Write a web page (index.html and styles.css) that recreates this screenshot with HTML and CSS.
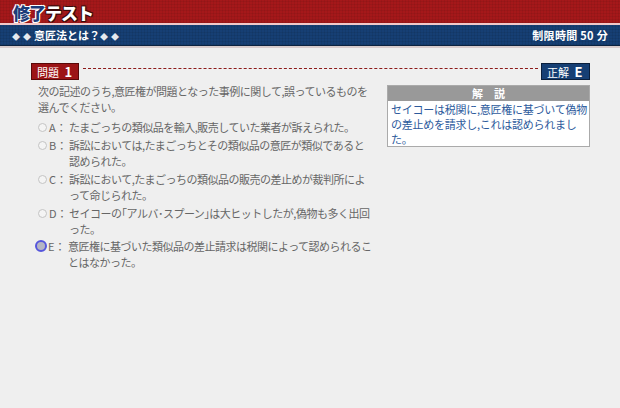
FILE: index.html
```html
<!DOCTYPE html>
<html lang="ja">
<head>
    <meta charset="UTF-8">
    <meta name="viewport" content="width=device-width, initial-scale=1.0">
    <title>修了テスト</title>
    <link rel="stylesheet" href="styles.css">
</head>
<body>
    <header class="cabecera">
        <div class="barra-titulo">
            <h1 class="titulo"><span class="titulo-azul">修了</span><span class="titulo-blanco">テスト</span></h1>
        </div>
        <div class="barra-sub">
            <span class="tema"><i>◆</i><i>◆</i>意匠法とは？<i>◆</i><i>◆</i></span>
            <span class="tiempo">制限時間 50 分</span>
        </div>
    </header>

    <main class="contenido">
        <div class="pregunta-cab">
            <span class="etiqueta-pregunta">問題 <b>1</b></span>
            <span class="linea"></span>
            <span class="etiqueta-correcta">正解 <b>E</b></span>
        </div>

        <div class="pregunta-cuerpo">
            <div class="columna">
                <p class="enunciado">次の記述のうち,意匠権が問題となった事例に関して,誤っているものを<br>選んでください。</p>
                <ul class="opciones">
                    <li class="opcion"><span class="radio"></span><span class="letra">A：</span><span class="texto">たまごっちの類似品を輸入,販売していた業者が訴えられた。</span></li>
                    <li class="opcion"><span class="radio"></span><span class="letra">B：</span><span class="texto">訴訟においては,たまごっちとその類似品の意匠が類似であると<br>認められた。</span></li>
                    <li class="opcion"><span class="radio"></span><span class="letra">C：</span><span class="texto">訴訟において,たまごっちの類似品の販売の差止めが裁判所によ<br>って命じられた。</span></li>
                    <li class="opcion"><span class="radio"></span><span class="letra">D：</span><span class="texto">セイコーの｢アルバ･スプーン｣は大ヒットしたが,偽物も多く出回<br>った。</span></li>
                    <li class="opcion elegida"><span class="radio"></span><span class="letra">E：</span><span class="texto">意匠権に基づいた類似品の差止請求は税関によって認められるこ<br>とはなかった。</span></li>
                </ul>
            </div>

            <aside class="explicacion">
                <div class="explicacion-cab">解　説</div>
                <p class="explicacion-texto">セイコーは税関に,意匠権に基づいて偽物<br>の差止めを請求し,これは認められまし<br>た。</p>
            </aside>
        </div>
    </main>
</body>
</html>
```

FILE: styles.css
```css
/* ------------------------- base ------------------------- */
body {
    margin: 0;
    background-color: #efefef;
    font-family: "Noto Sans CJK JP", "Noto Sans", sans-serif;
    font-size: 11px;
    color: #666;
}

/* ------------------------- cabecera ------------------------- */
.barra-titulo {
    height: 21px;
    padding: 2px 0 0 13px;
    background-color: #a5181a;
    background-image:
        repeating-linear-gradient(90deg, rgba(0,0,0,0.06) 0 1px, transparent 1px 3px),
        repeating-linear-gradient(0deg, rgba(0,0,0,0.06) 0 1px, transparent 1px 3px);
    border-bottom: 2px solid #f2c9c9;
}

.titulo {
    margin: 0;
    font-size: 17px;
    line-height: 21px;
    font-weight: 900;
    letter-spacing: -1px;
}

.titulo-azul {
    color: #1c3c7a;
    text-shadow: -1px -1px 0 #fff, 1px -1px 0 #fff, -1px 1px 0 #fff, 1px 1px 0 #fff;
}

.titulo-blanco {
    color: #fff;
    text-shadow: -1px -1px 0 #3a0a0a, 1px -1px 0 #3a0a0a, -1px 1px 0 #3a0a0a, 1px 1px 0 #3a0a0a;
}

.barra-sub {
    height: 20px;
    display: flex;
    justify-content: space-between;
    align-items: center;
    padding: 0 12px;
    background-color: #163f74;
    background-image:
        repeating-linear-gradient(90deg, rgba(0,0,0,0.07) 0 1px, transparent 1px 3px),
        repeating-linear-gradient(0deg, rgba(0,0,0,0.07) 0 1px, transparent 1px 3px);
    border-bottom: 1px solid #0c2340;
    box-shadow: 0 2px 0 #d8cccc;
    color: #fff;
    font-size: 11px;
    font-weight: bold;
}

.tema i {
    font-style: normal;
    font-size: 8px;
    margin-right: 3px;
    color: #e6e9ef;
}

.tiempo {
    letter-spacing: 0.3px;
}

/* ------------------------- contenido ------------------------- */
.contenido {
    padding: 17px 30px 0 31px;
}

.pregunta-cab {
    display: flex;
    align-items: center;
}

.etiqueta-pregunta,
.etiqueta-correcta {
    height: 15px;
    line-height: 15px;
    color: #fff;
    font-size: 11px;
    padding: 0 5px;
    white-space: nowrap;
}

.etiqueta-pregunta b,
.etiqueta-correcta b {
    font-size: 13px;
    margin-left: 3px;
}

.etiqueta-pregunta {
    width: 36px;
    background-color: #9c1416;
    border: 1px solid #5a0808;
}

.etiqueta-correcta {
    width: 37px;
    background-color: #163f74;
    border: 1px solid #0a1f3c;
}

.linea {
    flex: 1;
    margin: 0 3px 0 4px;
    border-top: 1px dashed #8c1a1a;
    position: relative;
    top: -3px;
}

.pregunta-cuerpo {
    display: flex;
    justify-content: space-between;
    margin-top: 3px;
}

.columna {
    padding-left: 7px;
    width: 340px;
    letter-spacing: -0.5px;
}

.enunciado {
    margin: 0;
    line-height: 16px;
    white-space: nowrap;
}

.opciones {
    list-style: none;
    margin: 4px 0 0;
    padding: 0;
}

.opcion {
    display: flex;
    line-height: 16px;
    margin-bottom: 2px;
}

.texto {
    white-space: nowrap;
}

.radio {
    flex: none;
    width: 7px;
    height: 7px;
    margin: 4px 2px 0 0;
    border: 1px solid #c4c4c4;
    border-radius: 50%;
    background-color: #f4f4f4;
}

.letra {
    flex: none;
    width: 20px;
    letter-spacing: 0;
}

.elegida {
    margin-top: -1px;
}

.elegida .radio {
    width: 8px;
    height: 8px;
    margin: 2px 1px 0 -3px;
    border: 2.5px solid #5656dc;
    background-color: #b5b5c4;
}

/* ------------------------- explicacion ------------------------- */
.explicacion {
    width: 203px;
    height: 62px;
    margin-top: 2px;
    background-color: #fff;
    border: 1px solid #aaa;
    box-sizing: border-box;
}

.explicacion-cab {
    height: 15px;
    line-height: 15px;
    background-color: #999;
    color: #fff;
    font-weight: bold;
    text-align: center;
}

.explicacion-texto {
    margin: 0;
    padding: 1px 3px 0;
    line-height: 15px;
    color: #2c5a9c;
    letter-spacing: -0.25px;
    white-space: nowrap;
}
```
